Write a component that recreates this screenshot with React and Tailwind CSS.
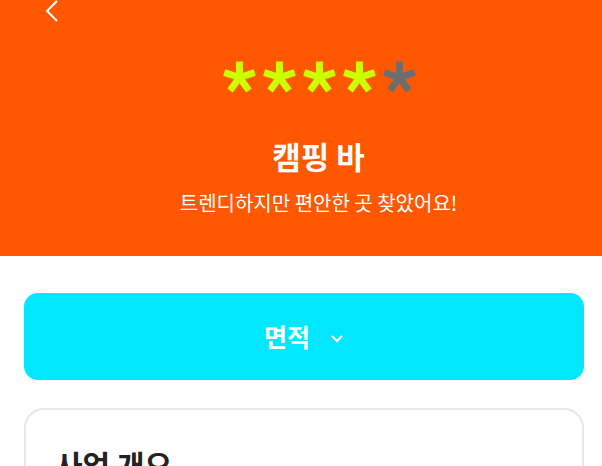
import React from 'react';
import { ChevronDown } from 'lucide-react';

const Star = ({ on }) => (
  <svg width="33" height="33" viewBox="-17 -17 34 34" className={on ? 'text-[#CCFF00]' : 'text-[#6B6E71]'}>
    {[0, 72, 144, 216, 288].map((a) => (
      <line key={a} x1="0" y1="0" x2="0" y2="-16.5" stroke="currentColor" strokeWidth="7" transform={`rotate(${a})`} />
    ))}
  </svg>
);

export default function App() {
  const rating = 4;

  return (
    <div className="w-[602px] h-[466px] overflow-hidden bg-white font-['Noto_Sans_CJK_KR','Noto_Sans',sans-serif]">
      <header className="h-[256px] bg-[#FF5800] flex flex-col">
        <div className="h-[22px] pl-[45px]">
          <svg width="14" height="22" viewBox="0 0 14 22" fill="none">
            <path d="M12 1 L2 11 L12 21" stroke="white" strokeWidth="2" />
          </svg>
        </div>
        <div className="mt-[39px] flex justify-center gap-[7px] pl-[37px]">
          {[1, 2, 3, 4, 5].map((i) => (
            <Star key={i} on={i <= rating} />
          ))}
        </div>
        <h1 className="mt-[41px] pl-[35px] text-center text-[31px] font-bold text-white leading-[42px]">캠핑 바</h1>
        <p className="mt-[12px] pl-[35px] text-center text-[20px] text-white leading-[28px]">
          트렌디하지만 편안한 곳 찾았어요!
        </p>
      </header>

      <div className="ml-6 mr-[18px] pt-[37px]">
        <button
          type="button"
          className="w-full h-[87px] rounded-[14px] bg-[#00E7FF] flex items-center justify-center gap-[20px] text-white"
        >
          <span className="text-[25px] font-bold">면적</span>
          <svg width="14" height="9" viewBox="0 0 14 9" fill="none" className="mt-[3px]">
            <path d="M2 2 L7 7 L12 2" stroke="white" strokeWidth="2" />
          </svg>
        </button>

        <div className="mt-[28px] border-2 border-[#E5E7EB] rounded-[20px] h-[120px] pl-[29px] pr-[30px] pt-[33px] flex items-start justify-between">
          <h2 className="text-[30px] font-bold text-[#222222] leading-[42px]">사업 개요</h2>
          <ChevronDown className="w-[32px] h-[32px] mt-[13px] text-[#1F2328]" strokeWidth={2.5} />
        </div>
      </div>
    </div>
  );
}
